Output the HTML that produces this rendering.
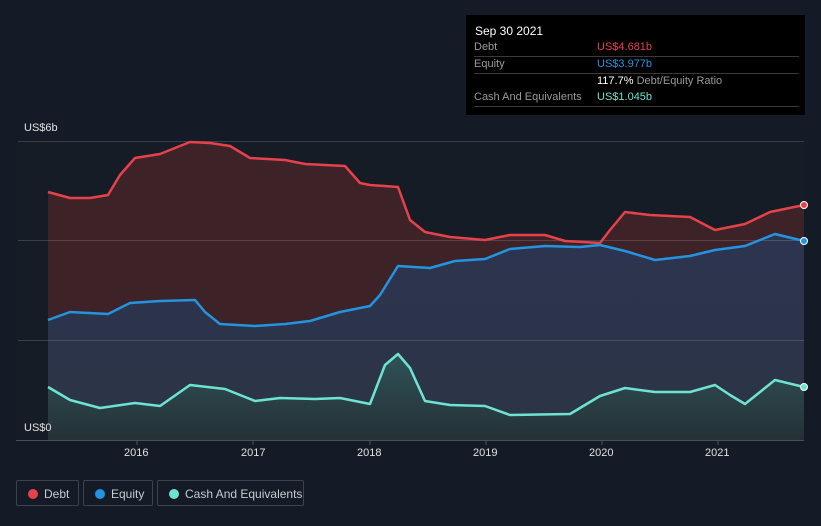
<!DOCTYPE html>
<html><head><meta charset="utf-8"><style>
html,body{margin:0;padding:0;background:#151b26;width:821px;height:526px;overflow:hidden;font-family:"Liberation Sans",sans-serif;}
.tip{position:absolute;left:466px;top:15px;width:339px;height:100px;background:#000;color:#fff;font-size:11px;}
.tip .r{position:absolute;left:8px;right:6px;height:17px;border-bottom:1px solid #3a3a3a;color:#9a9a9a;line-height:17px}
.tip .v{position:absolute;left:123px}
.leg{position:absolute;top:480px;height:26px;border:1px solid #3d424b;border-radius:2px;color:#c8cbd0;font-size:12px;line-height:26px;box-sizing:border-box}
.leg i{position:absolute;left:11px;top:8px;width:10px;height:10px;border-radius:50%}
.leg span{position:absolute;left:27px}
.ax{position:absolute;color:#e0e0e0;font-size:11px}
</style></head><body>
<svg width="821" height="526" style="position:absolute;left:0;top:0">
<defs><linearGradient id="cg" x1="0" y1="0" x2="0" y2="1"><stop offset="0" stop-color="#2f5257"/><stop offset="1" stop-color="#243136"/></linearGradient>
<linearGradient id="eg" x1="0" y1="0" x2="0" y2="1"><stop offset="0" stop-color="#2d3450"/><stop offset="1" stop-color="#2c3445"/></linearGradient></defs>
<rect x="18" y="141" width="786" height="299" fill="#161c26"/>
<path d="M48,192 L70,198 90,198 108,195 120,175 135,158 160,154 170,150 190,142 210,143 230,146 250,158 285,160 305,164 345,166 360,183 370,185 398,187 410,220 425,232 450,237 485,240 510,235 545,235 565,241 600,243 610,230 625,212 650,215 690,217 715,230 745,224 770,212 804,205 L804,440 48,440Z" fill="#3d2228"/>
<path d="M48,320 L70,312 108,314 130,303 160,301 195,300 205,312 220,324 255,326 285,324 310,321 340,312 370,306 380,295 398,266 430,268 455,261 485,259 510,249 545,246 580,247 600,245 625,251 655,260 690,256 715,250 745,246 775,234 804,241 L804,440 48,440Z" fill="url(#eg)"/>
<path d="M48,387 L70,400 100,408 135,403 160,406 190,385 225,389 255,401 280,398 315,399 340,398 370,404 385,365 398,354 410,368 425,401 450,405 485,406 510,415 570,414 600,396 625,388 655,392 690,392 715,385 730,395 745,404 775,380 804,387 L804,440 48,440Z" fill="url(#cg)"/>
<g stroke="#ffffff" stroke-opacity="0.15" stroke-width="1"><line x1="18" y1="141.5" x2="804" y2="141.5"/><line x1="18" y1="240.5" x2="804" y2="240.5"/><line x1="18" y1="340.5" x2="804" y2="340.5"/></g>
<line x1="16" y1="440.5" x2="804" y2="440.5" stroke="#4a505a"/>
<g stroke="#4a505a"><line x1="137" y1="441" x2="137" y2="445"/><line x1="253" y1="441" x2="253" y2="445"/><line x1="370" y1="441" x2="370" y2="445"/><line x1="486" y1="441" x2="486" y2="445"/><line x1="602" y1="441" x2="602" y2="445"/><line x1="718" y1="441" x2="718" y2="445"/></g>
<g fill="none" stroke-width="2.5" stroke-linejoin="round">
<polyline stroke="#e5424a" points="48,192 70,198 90,198 108,195 120,175 135,158 160,154 170,150 190,142 210,143 230,146 250,158 285,160 305,164 345,166 360,183 370,185 398,187 410,220 425,232 450,237 485,240 510,235 545,235 565,241 600,243 610,230 625,212 650,215 690,217 715,230 745,224 770,212 804,205"/>
<polyline stroke="#2394e0" points="48,320 70,312 108,314 130,303 160,301 195,300 205,312 220,324 255,326 285,324 310,321 340,312 370,306 380,295 398,266 430,268 455,261 485,259 510,249 545,246 580,247 600,245 625,251 655,260 690,256 715,250 745,246 775,234 804,241"/>
<polyline stroke="#6ee3d2" points="48,387 70,400 100,408 135,403 160,406 190,385 225,389 255,401 280,398 315,399 340,398 370,404 385,365 398,354 410,368 425,401 450,405 485,406 510,415 570,414 600,396 625,388 655,392 690,392 715,385 730,395 745,404 775,380 804,387"/>
</g>
<circle cx="804" cy="205" r="3.5" fill="#e5424a" stroke="#fff" stroke-width="1"/>
<circle cx="804" cy="241" r="3.5" fill="#2394e0" stroke="#fff" stroke-width="1"/>
<circle cx="804" cy="387" r="3.5" fill="#6ee3d2" stroke="#fff" stroke-width="1"/>
</svg>
<div class="ax" style="left:24px;top:122px">US$6b</div>
<div class="ax" style="left:24px;top:422px">US$0</div>
<div class="ax" style="left:124px;top:447px">2016</div>
<div class="ax" style="left:241px;top:447px">2017</div>
<div class="ax" style="left:357px;top:447px">2018</div>
<div class="ax" style="left:473px;top:447px">2019</div>
<div class="ax" style="left:589px;top:447px">2020</div>
<div class="ax" style="left:705px;top:447px">2021</div>
<div class="tip">
<div style="position:absolute;left:9px;top:9px;font-size:12px">Sep 30 2021</div>
<div class="r" style="top:24px">Debt<span class="v" style="color:#e5424a">US$4.681b</span></div>
<div class="r" style="top:41px">Equity<span class="v" style="color:#2394e0">US$3.977b</span></div>
<div class="r" style="top:58px;border:none"><span class="v" style="color:#fff;left:123px">117.7% <span style="color:#9a9a9a">Debt/Equity Ratio</span></span></div>
<div class="r" style="top:74px">Cash And Equivalents<span class="v" style="color:#6ee3d2">US$1.045b</span></div>
</div>
<div class="leg" style="left:16px;width:63px"><i style="background:#e5424a"></i><span>Debt</span></div>
<div class="leg" style="left:83px;width:70px"><i style="background:#2394e0"></i><span>Equity</span></div>
<div class="leg" style="left:157px;width:147px"><i style="background:#6ee3d2"></i><span>Cash And Equivalents</span></div>
</body></html>
